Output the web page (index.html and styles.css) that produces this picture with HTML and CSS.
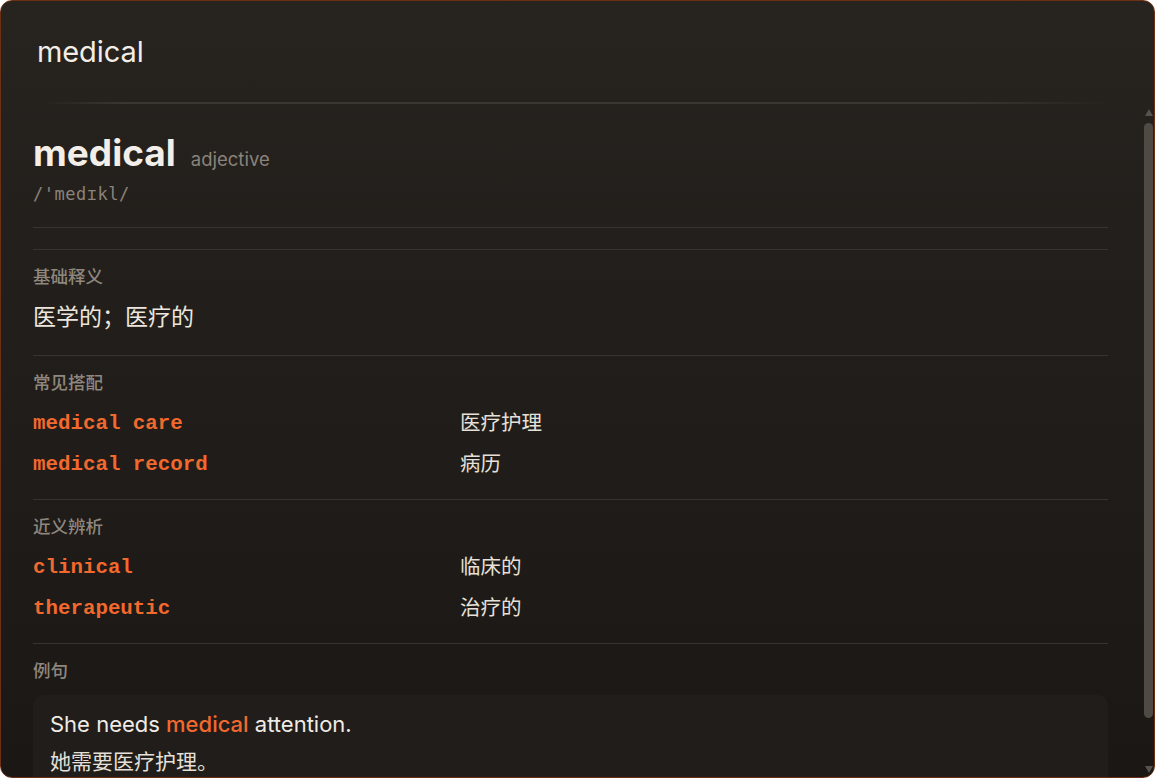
FILE: index.html
```html
<!DOCTYPE html>
<html lang="zh">
<head>
<meta charset="utf-8">
<title>medical</title>
<link rel="stylesheet" href="styles.css">
</head>
<body>
<div class="window">
  <header class="top">
    <div class="query">medical</div>
  </header>
  <div class="divider"></div>
  <div class="body">
    <main class="scroll">
      <div class="head">
        <div class="title-row">
          <h1 class="word">medical</h1>
          <span class="pos">adjective</span>
        </div>
        <div class="phon">/'medɪkl/</div>
      </div>

      <section class="sec">
        <div class="label">基础释义</div>
        <div class="meaning">医学的；医疗的</div>
      </section>

      <section class="sec">
        <div class="label">常见搭配</div>
        <div class="rows">
          <div class="row"><span class="term">medical care</span><span class="trans">医疗护理</span></div>
          <div class="row"><span class="term">medical record</span><span class="trans">病历</span></div>
        </div>
      </section>

      <section class="sec">
        <div class="label">近义辨析</div>
        <div class="rows">
          <div class="row"><span class="term">clinical</span><span class="trans">临床的</span></div>
          <div class="row"><span class="term">therapeutic</span><span class="trans">治疗的</span></div>
        </div>
      </section>

      <section class="sec last">
        <div class="label">例句</div>
        <div class="example">
          <div class="en">She needs <span class="hl">medical</span> attention.</div>
          <div class="zh">她需要医疗护理。</div>
        </div>
      </section>
    </main>
    <div class="sbar" aria-hidden="true">
      <div class="arrow up"></div>
      <div class="thumb"></div>
      <div class="spacer"></div>
      <div class="arrow down"></div>
    </div>
  </div>
</div>
</body>
</html>
```

FILE: styles.css
```css
html, body {
  margin: 0;
  padding: 0;
  height: 100%;
  background: #ffffff;
}

body {
  font-family: Inter, "Noto Sans CJK SC", sans-serif;
  color: #ece6de;
}

.window {
  box-sizing: border-box;
  height: 100vh;
  border: 1px solid #6e3014;
  border-radius: 12px;
  background: linear-gradient(180deg, #27231f 0%, #1f1c19 60%, #1a1714 100%);
  display: flex;
  flex-direction: column;
  overflow: hidden;
}

.top {
  height: 101px;
  flex: none;
  display: flex;
  align-items: center;
  padding-left: 36px;
}

.query {
  font-size: 29px;
  color: #f2ede6;
  letter-spacing: -0.1px;
}

.divider {
  flex: none;
  height: 2px;
  margin: 0 40px;
  background: linear-gradient(90deg, rgba(70,64,58,0) 0%, #3b3632 8%, #3b3632 85%, rgba(70,64,58,0) 100%);
}

.body {
  flex: 1;
  min-height: 0;
  display: flex;
}

.scroll {
  flex: 1;
  min-width: 0;
  overflow: hidden;
  padding: 0 33px 44px 32px;
}

.sbar {
  flex: none;
  width: 13px;
  box-sizing: border-box;
  padding: 5px 1px 4px 3px;
  display: flex;
  flex-direction: column;
  align-items: center;
}

.arrow {
  width: 0;
  height: 0;
  border-left: 4.5px solid transparent;
  border-right: 4.5px solid transparent;
}

.arrow.up {
  border-bottom: 7px solid #57524c;
}

.arrow.down {
  border-top: 7px solid #57524c;
}

.thumb {
  margin-top: 7px;
  width: 9px;
  height: 595px;
  border-radius: 4.5px;
  background: #4f4a44;
}

.spacer {
  flex: 1;
}

.head {
  padding: 27px 0 21px;
  border-bottom: 1px solid #38332f;
  margin-bottom: 21px;
}

.title-row {
  display: flex;
  align-items: baseline;
  gap: 15px;
}

.word {
  margin: 0;
  font-size: 37px;
  line-height: 44px;
  font-weight: 700;
  color: #f3eee7;
}

.pos {
  font-size: 18.5px;
  color: #8b837a;
}

.phon {
  margin-top: 7px;
  font-family: "DejaVu Sans Mono", monospace;
  font-size: 17px;
  line-height: 24px;
  letter-spacing: 0.5px;
  color: #8b837a;
}

.sec {
  border-top: 1px solid #38332f;
  padding: 15px 0 16px;
}

.label {
  font-size: 17.5px;
  line-height: 24px;
  font-weight: 500;
  color: #8f877e;
  margin-bottom: 6px;
}

.meaning {
  font-size: 23px;
  line-height: 28px;
  padding: 8px 0;
  color: #ece6de;
}

.row {
  display: grid;
  grid-template-columns: 427px 1fr;
  align-items: center;
  height: 41px;
}

.term {
  font-family: "Liberation Mono", monospace;
  font-weight: 700;
  font-size: 20.8px;
  color: #f2692e;
  padding-top: 4px;
}

.trans {
  font-size: 20.5px;
  color: #e6e0d8;
  padding-bottom: 2px;
}

.example {
  margin-top: 12px;
  background: #201d1a;
  border-radius: 10px;
  padding: 12px 17px 14px;
}

.en {
  font-size: 22px;
  line-height: 34px;
  color: #f0ebe4;
}

.hl {
  color: #f2692e;
  font-weight: 500;
}

.zh {
  margin-top: 4px;
  font-size: 21px;
  line-height: 34px;
  color: #e6e0d8;
}
```
